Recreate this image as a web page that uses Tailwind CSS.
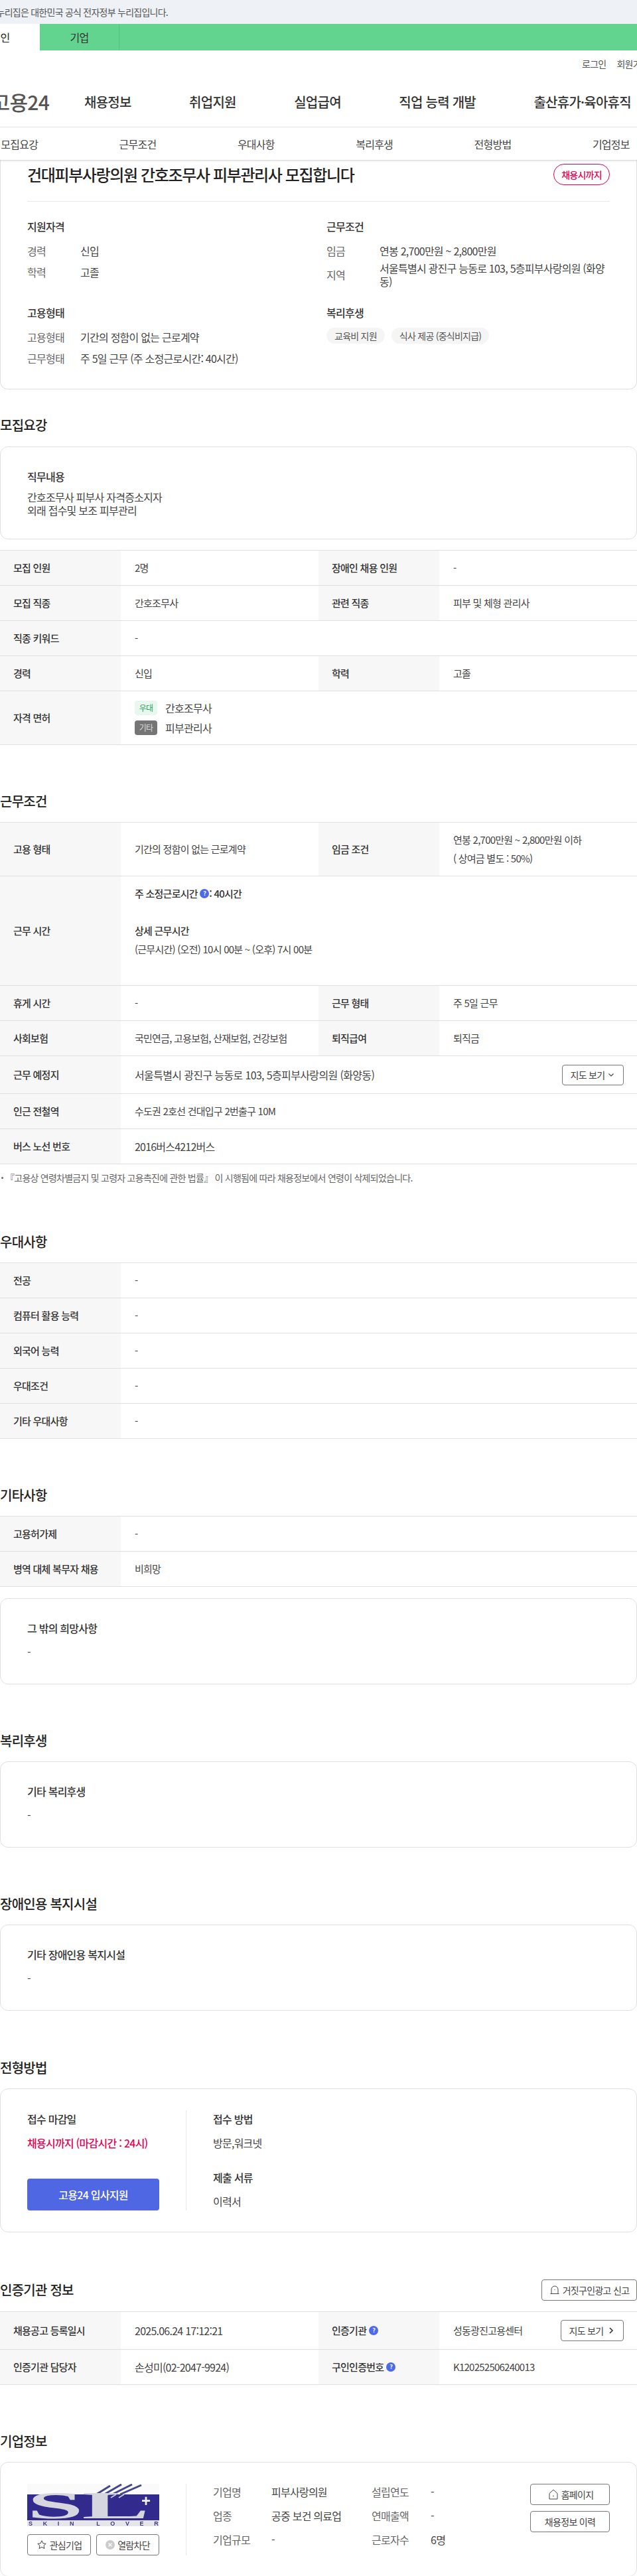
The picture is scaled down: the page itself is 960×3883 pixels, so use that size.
<!DOCTYPE html>
<html lang="ko">
<head>
    <meta charset="UTF-8">
    <title>건대피부사랑의원 간호조무사 피부관리사 모집합니다 | 고용24</title>
    <script src="https://cdn.jsdelivr.net/npm/@tailwindcss/browser@4"></script>
</head>
<body class="w-[960px] h-[3883px] overflow-hidden bg-white text-[#444] text-[15px] tracking-[-0.05em] font-['Noto_Sans_CJK_KR','Noto_Sans',sans-serif]">

    <!-- Government banner -->
    <div class="h-9 bg-[#eef1f6] flex items-center">
        <div class="w-[253px] flex justify-end whitespace-nowrap text-[14px] text-[#555] overflow-hidden">이 누리집은 대한민국 공식 전자정부 누리집입니다.</div>
    </div>

    <!-- Person / company tabs -->
    <div class="h-10 bg-[#62d490] flex ml-[-59px] text-[16px]">
        <div class="w-[119px] bg-white flex items-center justify-center text-[#222]">개인</div>
        <div class="w-[120px] border-r border-[#58c482] flex items-center justify-center text-[#333]">기업</div>
    </div>

    <!-- Header -->
    <div class="h-10 flex items-center pl-[877px] gap-4 whitespace-nowrap text-[14px] text-[#555] overflow-hidden">
        <span>로그인</span><span>회원가입</span>
    </div>
    <nav class="h-[76px] flex items-center border-b border-[#e8e8e8] whitespace-nowrap text-[20px] font-medium text-[#333]">
        <div class="w-[74px] shrink-0 flex justify-end text-[30px] font-medium text-[#555]">고용24</div>
        <div class="ml-[53px] flex gap-[87.5px]">
            <a>채용정보</a>
            <a>취업지원</a>
            <a>실업급여</a>
            <a>직업 능력 개발</a>
            <a>출산휴가·육아휴직</a>
        </div>
    </nav>

    <!-- Sticky section tabs -->
    <div class="relative z-10 h-[49px] bg-white shadow-[0_1px_3px_rgba(0,0,0,0.2)] overflow-hidden">
        <div class="ml-[-60px] w-[1070px] h-full grid grid-cols-6 items-center text-center text-[16px] text-[#444]">
            <a>모집요강</a>
            <a>근무조건</a>
            <a>우대사항</a>
            <a>복리후생</a>
            <a>전형방법</a>
            <a>기업정보</a>
        </div>
    </div>

    <main>
        <!-- Summary card -->
        <section class="h-[346px] border border-t-0 border-[#e0e0e0] rounded-b-xl px-10 pt-1 text-[16px]">
            <div class="h-[59px] pb-[22px] border-b border-[#e8e8e8] flex justify-between items-center">
                <h1 class="text-[24px] leading-[36px] font-medium tracking-[-0.057em] text-[#222]">건대피부사랑의원 간호조무사 피부관리사 모집합니다</h1>
                <span class="w-[85px] h-8 border border-[#e6004f] rounded-full flex items-center justify-center text-[14px] font-medium text-[#e6004f]">채용시까지</span>
            </div>
            <div class="grid grid-cols-[451px_1fr] mt-[25px]">
                <div class="h-[130px]">
                    <h3 class="leading-6 font-medium text-[#333]">지원자격</h3>
                    <div class="flex mt-[15px] leading-5"><span class="w-20 text-[#666]">경력</span><span>신입</span></div>
                    <div class="flex mt-3 leading-5"><span class="w-20 text-[#666]">학력</span><span>고졸</span></div>
                </div>
                <div class="h-[130px]">
                    <h3 class="leading-6 font-medium text-[#333]">근무조건</h3>
                    <div class="flex mt-[15px] leading-5"><span class="w-20 text-[#666]">임금</span><span>연봉 2,700만원 ~ 2,800만원</span></div>
                    <div class="flex items-center mt-[7px] leading-[19.5px]"><span class="w-20 shrink-0 text-[#666]">지역</span><span>서울특별시 광진구 능동로 103, 5층피부사랑의원 (화양동)</span></div>
                </div>
                <div>
                    <h3 class="leading-6 font-medium text-[#333]">고용형태</h3>
                    <div class="flex mt-[15px] leading-5"><span class="w-20 text-[#666]">고용형태</span><span>기간의 정함이 없는 근로계약</span></div>
                    <div class="flex mt-3 leading-5"><span class="w-20 text-[#666]">근무형태</span><span>주 5일 근무 (주 소정근로시간: 40시간)</span></div>
                </div>
                <div>
                    <h3 class="leading-6 font-medium text-[#333]">복리후생</h3>
                    <div class="flex gap-2.5 mt-[11px] text-[14px] text-[#555]">
                        <span class="h-6 px-3 bg-[#f5f5f5] rounded-full flex items-center">교육비 지원</span>
                        <span class="h-6 px-3 bg-[#f5f5f5] rounded-full flex items-center">식사 제공 (중식비지급)</span>
                    </div>
                </div>
            </div>
        </section>

        <!-- 모집요강 -->
        <section class="mt-[39px]">
            <h2 class="text-[20px] leading-[30px] font-medium text-[#222] mb-[17px]">모집요강</h2>
            <div class="h-[140px] border border-[#e0e0e0] rounded-xl px-10 pt-8 text-[16px]">
                <h3 class="leading-6 font-medium text-[#333]">직무내용</h3>
                <p class="mt-2.5 leading-[19.5px]">간호조무사 피부사 자격증소지자<br>외래 접수및 보조 피부관리</p>
            </div>
            <div class="mt-4 border-t border-[#e0e0e0]">
                <div class="flex h-[53px] border-b border-[#e0e0e0]">
                    <div class="w-[182px] shrink-0 pl-5 flex items-center bg-[#f7f7f7] font-medium text-[#333]">모집 인원</div>
                    <div class="w-[298px] shrink-0 pl-[21px] flex items-center">2명</div>
                    <div class="w-[182px] shrink-0 pl-5 flex items-center bg-[#f7f7f7] font-medium text-[#333]">장애인 채용 인원</div>
                    <div class="flex-1 pl-[21px] flex items-center">-</div>
                </div>
                <div class="flex h-[53px] border-b border-[#e0e0e0]">
                    <div class="w-[182px] shrink-0 pl-5 flex items-center bg-[#f7f7f7] font-medium text-[#333]">모집 직종</div>
                    <div class="w-[298px] shrink-0 pl-[21px] flex items-center">간호조무사</div>
                    <div class="w-[182px] shrink-0 pl-5 flex items-center bg-[#f7f7f7] font-medium text-[#333]">관련 직종</div>
                    <div class="flex-1 pl-[21px] flex items-center">피부 및 체형 관리사</div>
                </div>
                <div class="flex h-[53px] border-b border-[#e0e0e0]">
                    <div class="w-[182px] shrink-0 pl-5 flex items-center bg-[#f7f7f7] font-medium text-[#333]">직종 키워드</div>
                    <div class="flex-1 pl-[21px] flex items-center">-</div>
                </div>
                <div class="flex h-[53px] border-b border-[#e0e0e0]">
                    <div class="w-[182px] shrink-0 pl-5 flex items-center bg-[#f7f7f7] font-medium text-[#333]">경력</div>
                    <div class="w-[298px] shrink-0 pl-[21px] flex items-center">신입</div>
                    <div class="w-[182px] shrink-0 pl-5 flex items-center bg-[#f7f7f7] font-medium text-[#333]">학력</div>
                    <div class="flex-1 pl-[21px] flex items-center">고졸</div>
                </div>
                <div class="flex h-[81px] border-b border-[#e0e0e0]">
                    <div class="w-[182px] shrink-0 pl-5 flex items-center bg-[#f7f7f7] font-medium text-[#333]">자격 면허</div>
                    <div class="flex-1 pl-[21px] flex flex-col justify-center gap-1.5">
                        <div class="flex items-center gap-3 text-[16px]"><span class="w-[34px] h-[22px] rounded bg-[#e8f8ee] text-[#2e9e5b] text-[12px] flex items-center justify-center">우대</span>간호조무사</div>
                        <div class="flex items-center gap-3 text-[16px]"><span class="w-[34px] h-[22px] rounded bg-[#757575] text-[#ddd] text-[12px] flex items-center justify-center">기타</span>피부관리사</div>
                    </div>
                </div>
            </div>
        </section>

        <!-- 근무조건 -->
        <section class="mt-[70px]">
            <h2 class="text-[20px] leading-[30px] font-medium text-[#222] mb-4">근무조건</h2>
            <div class="border-t border-[#e0e0e0]">
                <div class="flex h-[81px] border-b border-[#e0e0e0]">
                    <div class="w-[182px] shrink-0 pl-5 flex items-center bg-[#f7f7f7] font-medium text-[#333]">고용 형태</div>
                    <div class="w-[298px] shrink-0 pl-[21px] flex items-center">기간의 정함이 없는 근로계약</div>
                    <div class="w-[182px] shrink-0 pl-5 flex items-center bg-[#f7f7f7] font-medium text-[#333]">임금 조건</div>
                    <div class="flex-1 pl-[21px] flex flex-col justify-center gap-2 leading-5">
                        <p>연봉 2,700만원 ~ 2,800만원 이하</p>
                        <p>( 상여금 별도 : 50%)</p>
                    </div>
                </div>
                <div class="flex h-[165px] border-b border-[#e0e0e0]">
                    <div class="w-[182px] shrink-0 pl-5 flex items-center bg-[#f7f7f7] font-medium text-[#333]">근무 시간</div>
                    <div class="flex-1 pl-[21px] pt-4 leading-5">
                        <p class="flex items-center font-medium text-[#333]">주 소정근로시간&nbsp;<span class="w-3.5 h-3.5 rounded-full bg-[#4f6ae8] text-white text-[9px] font-bold flex items-center justify-center">?</span>: 40시간</p>
                        <p class="mt-9 font-medium text-[#333]">상세 근무시간</p>
                        <p class="mt-2">(근무시간) (오전) 10시 00분 ~ (오후) 7시 00분</p>
                    </div>
                </div>
                <div class="flex h-[53px] border-b border-[#e0e0e0]">
                    <div class="w-[182px] shrink-0 pl-5 flex items-center bg-[#f7f7f7] font-medium text-[#333]">휴게 시간</div>
                    <div class="w-[298px] shrink-0 pl-[21px] flex items-center">-</div>
                    <div class="w-[182px] shrink-0 pl-5 flex items-center bg-[#f7f7f7] font-medium text-[#333]">근무 형태</div>
                    <div class="flex-1 pl-[21px] flex items-center">주 5일 근무</div>
                </div>
                <div class="flex h-[53px] border-b border-[#e0e0e0]">
                    <div class="w-[182px] shrink-0 pl-5 flex items-center bg-[#f7f7f7] font-medium text-[#333]">사회보험</div>
                    <div class="w-[298px] shrink-0 pl-[21px] flex items-center">국민연금, 고용보험, 산재보험, 건강보험</div>
                    <div class="w-[182px] shrink-0 pl-5 flex items-center bg-[#f7f7f7] font-medium text-[#333]">퇴직급여</div>
                    <div class="flex-1 pl-[21px] flex items-center">퇴직금</div>
                </div>
                <div class="flex h-[57px] border-b border-[#e0e0e0]">
                    <div class="w-[182px] shrink-0 pl-5 flex items-center bg-[#f7f7f7] font-medium text-[#333]">근무 예정지</div>
                    <div class="flex-1 pl-[21px] pr-5 flex items-center justify-between">
                        <span class="text-[16px] tracking-[-0.04em]">서울특별시 광진구 능동로 103, 5층피부사랑의원 (화양동)</span>
                        <button class="w-[93px] h-[31px] border border-[#777] rounded flex items-center justify-center gap-1 text-[14px] tracking-[-0.05em]">지도 보기
                            <svg class="w-3 h-3" viewBox="0 0 12 12" fill="none" stroke="#444" stroke-width="1.2"><path d="M2.5 4.5 6 8l3.5-3.5"/></svg>
                        </button>
                    </div>
                </div>
                <div class="flex h-[53px] border-b border-[#e0e0e0]">
                    <div class="w-[182px] shrink-0 pl-5 flex items-center bg-[#f7f7f7] font-medium text-[#333]">인근 전철역</div>
                    <div class="flex-1 pl-[21px] flex items-center">수도권 2호선 건대입구 2번출구 10M</div>
                </div>
                <div class="flex h-[53px] border-b border-[#e0e0e0]">
                    <div class="w-[182px] shrink-0 pl-5 flex items-center bg-[#f7f7f7] font-medium text-[#333]">버스 노선 번호</div>
                    <div class="flex-1 pl-[21px] flex items-center text-[16px] tracking-[-0.05em]">2016버스4212버스</div>
                </div>
            </div>
            <p class="mt-2.5 flex items-center leading-5 text-[14px] text-[#666]"><span class="w-[3px] h-[3px] ml-0.5 mr-[3px] rounded-full bg-[#666]"></span>『고용상 연령차별금지 및 고령자 고용촉진에 관한 법률』 이 시행됨에 따라 채용정보에서 연령이 삭제되었습니다.</p>
        </section>

        <!-- 우대사항 -->
        <section class="mt-[72px]">
            <h2 class="text-[20px] leading-[30px] font-medium text-[#222] mb-4">우대사항</h2>
            <div class="border-t border-[#e0e0e0]">
                <div class="flex h-[53px] border-b border-[#e0e0e0]">
                    <div class="w-[182px] shrink-0 pl-5 flex items-center bg-[#f7f7f7] font-medium text-[#333]">전공</div>
                    <div class="flex-1 pl-[21px] flex items-center">-</div>
                </div>
                <div class="flex h-[53px] border-b border-[#e0e0e0]">
                    <div class="w-[182px] shrink-0 pl-5 flex items-center bg-[#f7f7f7] font-medium text-[#333]">컴퓨터 활용 능력</div>
                    <div class="flex-1 pl-[21px] flex items-center">-</div>
                </div>
                <div class="flex h-[53px] border-b border-[#e0e0e0]">
                    <div class="w-[182px] shrink-0 pl-5 flex items-center bg-[#f7f7f7] font-medium text-[#333]">외국어 능력</div>
                    <div class="flex-1 pl-[21px] flex items-center">-</div>
                </div>
                <div class="flex h-[53px] border-b border-[#e0e0e0]">
                    <div class="w-[182px] shrink-0 pl-5 flex items-center bg-[#f7f7f7] font-medium text-[#333]">우대조건</div>
                    <div class="flex-1 pl-[21px] flex items-center">-</div>
                </div>
                <div class="flex h-[53px] border-b border-[#e0e0e0]">
                    <div class="w-[182px] shrink-0 pl-5 flex items-center bg-[#f7f7f7] font-medium text-[#333]">기타 우대사항</div>
                    <div class="flex-1 pl-[21px] flex items-center">-</div>
                </div>
            </div>
        </section>

        <!-- 기타사항 -->
        <section class="mt-[70px]">
            <h2 class="text-[20px] leading-[30px] font-medium text-[#222] mb-4">기타사항</h2>
            <div class="border-t border-[#e0e0e0]">
                <div class="flex h-[53px] border-b border-[#e0e0e0]">
                    <div class="w-[182px] shrink-0 pl-5 flex items-center bg-[#f7f7f7] font-medium text-[#333]">고용허가제</div>
                    <div class="flex-1 pl-[21px] flex items-center">-</div>
                </div>
                <div class="flex h-[53px] border-b border-[#e0e0e0]">
                    <div class="w-[182px] shrink-0 pl-5 flex items-center bg-[#f7f7f7] font-medium text-[#333]">병역 대체 복무자 채용</div>
                    <div class="flex-1 pl-[21px] flex items-center">비희망</div>
                </div>
            </div>
            <div class="mt-[17px] h-[130px] border border-[#e0e0e0] rounded-xl px-10 pt-8 text-[16px]">
                <h3 class="leading-6 font-medium text-[#333]">그 밖의 희망사항</h3>
                <p class="mt-3.5 leading-5">-</p>
            </div>
        </section>

        <!-- 복리후생 -->
        <section class="mt-[70px]">
            <h2 class="text-[20px] leading-[30px] font-medium text-[#222] mb-4">복리후생</h2>
            <div class="h-[130px] border border-[#e0e0e0] rounded-xl px-10 pt-8 text-[16px]">
                <h3 class="leading-6 font-medium text-[#333]">기타 복리후생</h3>
                <p class="mt-3.5 leading-5">-</p>
            </div>
        </section>

        <!-- 장애인용 복지시설 -->
        <section class="mt-[70px]">
            <h2 class="text-[20px] leading-[30px] font-medium text-[#222] mb-4">장애인용 복지시설</h2>
            <div class="h-[130px] border border-[#e0e0e0] rounded-xl px-10 pt-8 text-[16px]">
                <h3 class="leading-6 font-medium text-[#333]">기타 장애인용 복지시설</h3>
                <p class="mt-3.5 leading-5">-</p>
            </div>
        </section>

        <!-- 전형방법 -->
        <section class="mt-[71px]">
            <h2 class="text-[20px] leading-[30px] font-medium text-[#222] mb-4">전형방법</h2>
            <div class="h-[217px] border border-[#e0e0e0] rounded-xl px-10 py-8 flex text-[16px]">
                <div class="w-[199px] shrink-0 pt-px flex flex-col">
                    <h3 class="leading-6 font-medium text-[#333]">접수 마감일</h3>
                    <p class="mt-3 leading-6 font-medium text-[#e6004f]">채용시까지 (마감시간 : 24시)</p>
                    <a class="mt-auto h-12 bg-[#4f67e2] rounded flex items-center justify-center font-medium text-white">고용24 입사지원</a>
                </div>
                <div class="ml-10 pl-10 pt-px border-l border-[#e8e8e8]">
                    <h3 class="leading-6 font-medium text-[#333]">접수 방법</h3>
                    <p class="mt-3 leading-6">방문,워크넷</p>
                    <h3 class="mt-7 leading-6 font-medium text-[#333]">제출 서류</h3>
                    <p class="mt-3 leading-6">이력서</p>
                </div>
            </div>
        </section>

        <!-- 인증기관 정보 -->
        <section class="mt-[71px]">
            <div class="flex justify-between items-center mb-4">
                <h2 class="text-[20px] leading-[30px] font-medium text-[#222]">인증기관 정보</h2>
                <button class="w-[144px] h-8 border border-[#777] rounded flex items-center justify-center gap-1 text-[14px] tracking-[-0.05em]">
                    <svg class="w-4 h-4" viewBox="0 0 16 16" fill="none" stroke="#444"><path d="M3 13.5V7a5 5 0 0 1 10 0v6.5M1.5 13.5h13"/><path d="M8 7v1"/></svg>거짓구인광고 신고
                </button>
            </div>
            <div class="border-t border-[#e0e0e0]">
                <div class="flex h-[57px] border-b border-[#e0e0e0]">
                    <div class="w-[182px] shrink-0 pl-5 flex items-center bg-[#f7f7f7] font-medium text-[#333]">채용공고 등록일시</div>
                    <div class="w-[298px] shrink-0 pl-[21px] flex items-center text-[16px]">2025.06.24 17:12:21</div>
                    <div class="w-[182px] shrink-0 pl-5 flex items-center gap-1 bg-[#f7f7f7] font-medium text-[#333]">인증기관<span class="w-3.5 h-3.5 rounded-full bg-[#4f6ae8] text-white text-[9px] font-bold flex items-center justify-center">?</span></div>
                    <div class="flex-1 pl-[21px] pr-5 flex items-center justify-between">
                        <span>성동광진고용센터</span>
                        <button class="w-[95px] h-8 border border-[#777] rounded flex items-center justify-center gap-1.5 text-[14px] tracking-[-0.05em]">지도 보기
                            <svg class="w-3 h-3" viewBox="0 0 12 12" fill="none" stroke="#333" stroke-width="1.6"><path d="M4 2l4 4-4 4"/></svg>
                        </button>
                    </div>
                </div>
                <div class="flex h-[53px] border-b border-[#e0e0e0]">
                    <div class="w-[182px] shrink-0 pl-5 flex items-center bg-[#f7f7f7] font-medium text-[#333]">인증기관 담당자</div>
                    <div class="w-[298px] shrink-0 pl-[21px] flex items-center text-[16px]">손성미(02-2047-9924)</div>
                    <div class="w-[182px] shrink-0 pl-5 flex items-center gap-1 bg-[#f7f7f7] font-medium text-[#333]">구인인증번호<span class="w-3.5 h-3.5 rounded-full bg-[#4f6ae8] text-white text-[9px] font-bold flex items-center justify-center">?</span></div>
                    <div class="flex-1 pl-[21px] flex items-center">K120252506240013</div>
                </div>
            </div>
        </section>

        <!-- 기업정보 -->
        <section class="mt-[70px]">
            <h2 class="text-[20px] leading-[30px] font-medium text-[#222] mb-4">기업정보</h2>
            <div class="h-[173px] border border-[#e0e0e0] rounded-xl px-10 pt-8 flex text-[16px]">
                <div class="w-[199px] shrink-0">
                    <svg class="w-[199px] h-16 block" viewBox="0 0 199 64">
                        <defs><filter id="soft"><feGaussianBlur stdDeviation="0.5"/></filter></defs>
                        <g filter="url(#soft)">
                            <rect width="199" height="64" fill="#fafafa"/>
                            <rect y="16" width="199" height="39" fill="#312a8c"/>
                            <path d="M104 16 125 3M116 16 142 1M128 16 158 1M140 16 172 2" stroke="#45458a" stroke-width="3" fill="none"/>
                            <path d="M102 21 110 16M114 21 122 16M126 21 134 16M138 21 146 16" stroke="#c8c8e0" stroke-width="2" fill="none"/>
                            <text x="0" y="52" font-family="Liberation Serif" font-weight="700" font-size="56" fill="#d6d6de" textLength="182" lengthAdjust="spacingAndGlyphs">SL</text>
                            <text x="172" y="34" font-family="Liberation Sans" font-weight="700" font-size="24" fill="#f2f2f6">+</text>
                            <rect y="55" width="199" height="9" fill="#e6e6ea"/>
                            <text x="2" y="63" font-family="Liberation Sans" font-weight="700" font-size="9" fill="#3d3a80" textLength="195" lengthAdjust="spacing">SKIN LOVER</text>
                        </g>
                    </svg>
                    <div class="flex justify-between mt-3 text-[14px]">
                        <button class="w-[96px] h-8 border border-[#777] rounded flex items-center justify-center gap-1 tracking-[-0.05em]">
                            <svg class="w-4 h-4" viewBox="0 0 16 16" fill="none" stroke="#444"><path d="M8 1.8l1.9 4 4.3.5-3.2 3 .9 4.3L8 11.4l-3.9 2.2.9-4.3-3.2-3 4.3-.5z"/></svg>관심기업
                        </button>
                        <button class="w-[95px] h-8 border border-[#777] rounded flex items-center justify-center gap-1 tracking-[-0.05em]">
                            <svg class="w-3.5 h-3.5" viewBox="0 0 14 14"><circle cx="7" cy="7" r="7" fill="#ccc"/><path d="M4.5 4.5l5 5m0-5l-5 5" stroke="#fff" stroke-width="1.2"/></svg>열람차단
                        </button>
                    </div>
                </div>
                <div class="ml-10 pl-10 h-[108px] border-l border-[#e8e8e8] grid grid-cols-[88px_151px_89px_1fr] gap-y-3 content-start w-[478px]">
                    <span class="leading-6 text-[#666]">기업명</span><span class="leading-6">피부사랑의원</span><span class="leading-6 text-[#666]">설립연도</span><span class="leading-6">-</span>
                    <span class="leading-6 text-[#666]">업종</span><span class="leading-6">공중 보건 의료업</span><span class="leading-6 text-[#666]">연매출액</span><span class="leading-6">-</span>
                    <span class="leading-6 text-[#666]">기업규모</span><span class="leading-6">-</span><span class="leading-6 text-[#666]">근로자수</span><span class="leading-6">6명</span>
                </div>
                <div class="w-[120px] ml-auto flex flex-col gap-[9px] text-[14px]">
                    <button class="h-8 border border-[#777] rounded flex items-center justify-center gap-0.5 tracking-[-0.05em]">
                        <svg class="w-5 h-5" viewBox="0 0 20 20" fill="none" stroke="#444" stroke-linejoin="round"><path d="M4 8.5 10 3l6 5.5V17H4z"/><path d="M10 11.5v2"/></svg>홈페이지
                    </button>
                    <button class="h-8 border border-[#777] rounded flex items-center justify-center tracking-[-0.05em]">채용정보 이력</button>
                </div>
            </div>
        </section>
    </main>
</body>
</html>
